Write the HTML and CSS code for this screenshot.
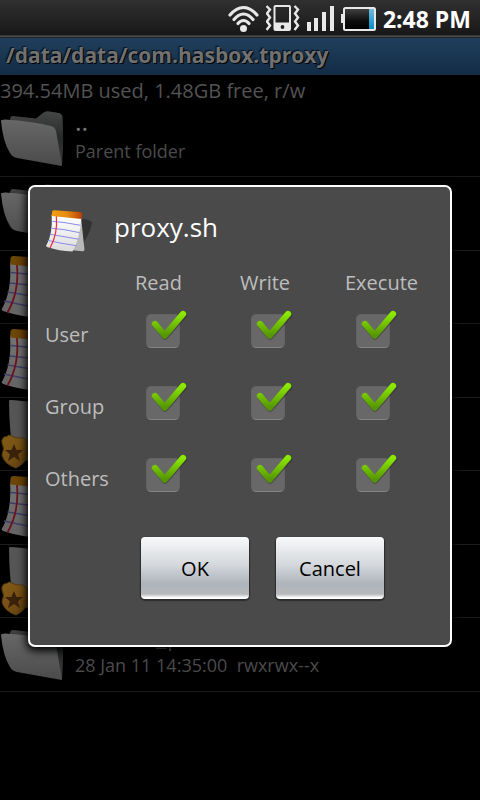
FILE: index.html
```html
<!DOCTYPE html>
<html lang="en">
<head>
<meta charset="utf-8">
<meta name="viewport" content="width=device-width, initial-scale=1">
<title>File permissions</title>
<link rel="stylesheet" href="styles.css">
</head>
<body>
<svg class="defs" aria-hidden="true">
  <defs>
    <linearGradient id="g-front" x1="0" y1="0" x2="0" y2="1"><stop offset="0" stop-color="#676767"/><stop offset="1" stop-color="#4b4b4b"/></linearGradient>
    <linearGradient id="g-back" x1="0" y1="0" x2="0" y2="1"><stop offset="0" stop-color="#454646"/><stop offset=".5" stop-color="#282929"/><stop offset="1" stop-color="#3a3a3a"/></linearGradient>
    <linearGradient id="g-strip" x1="0" y1="0" x2="1" y2="0"><stop offset="0" stop-color="#f0a010"/><stop offset=".5" stop-color="#e88a10"/><stop offset="1" stop-color="#b84008"/></linearGradient>
    <linearGradient id="g-page" x1="0" y1="0" x2="0" y2="1"><stop offset="0" stop-color="#fff"/><stop offset="1" stop-color="#dcdcdc"/></linearGradient>
    <linearGradient id="g-badge" x1="0" y1="0" x2="1" y2="1"><stop offset="0" stop-color="#835d16"/><stop offset=".5" stop-color="#765015"/><stop offset="1" stop-color="#593a0c"/></linearGradient>
    <linearGradient id="g-tick" x1="0" y1="0" x2="0" y2="1"><stop offset="0" stop-color="#8bea00"/><stop offset="1" stop-color="#559500"/></linearGradient>
    <linearGradient id="g-batt" x1="0" y1="0" x2="0" y2="1"><stop offset="0" stop-color="#444"/><stop offset=".6" stop-color="#0c0c0c"/><stop offset="1" stop-color="#000"/></linearGradient>
    <linearGradient id="g-charge" x1="0" y1="0" x2="0" y2="1"><stop offset="0" stop-color="#72b9dc"/><stop offset=".5" stop-color="#3aa5d6"/><stop offset="1" stop-color="#078ac5"/></linearGradient>
  </defs>
  <symbol id="folder" viewBox="0 0 72 72">
    <path d="M10 16Q10 12 13 12L36 14.500L43 9Q45 7 48 7.300L59 9Q62 9.500 62.500 13Q64 38 62 61Z" fill="url(#g-back)"/>
    <path d="M1 17Q1 15.500 5 15.500Q32 17 51 22Q55 23 56 27L62 61Q62 62.500 59 61.500L17 54Q12 53 10 49Q3 38 1 17Z" fill="url(#g-front)"/>
  </symbol>
  <symbol id="notepad" viewBox="0 0 48 48">
    <path d="M36 12Q44 12 47 15Q46 24 39 35L36 42Z" fill="#252525" opacity=".65"/>
    <path d="M36 10L39.500 43Q39 44.500 37 44.300L25 43Z" fill="#b8b8b8"/>
    <path d="M6.700 8Q8 27 1 39L2 40Q14 44 27.500 44.500Q35 32 36.300 11Z" fill="url(#g-page)"/>
    <path d="M7.300 14.300L19 15.500L35.500 18.300M6.700 21.300L19 22.600L34.700 25.700M5 27.300L18 29.500L33.500 32.200M2.700 33.300L16 36.200L31.500 38.700" fill="none" stroke="#8a8aee" stroke-width="1"/>
    <path d="M11.300 9Q13 27 5 41" fill="none" stroke="#f0283c" stroke-width="1.200"/>
    <path d="M7 5Q7 3.300 9 3.300L34 5Q37.300 5.300 37 7L36.500 12L6.700 9Z" fill="url(#g-strip)"/>
  </symbol>
  <symbol id="script" viewBox="0 0 72 72">
    <path d="M9 3Q9 1.500 12 2L54 6Q52 38 40 63L14 62Q9 32 9 3Z" fill="#555"/>
    <path d="M4 39Q7 39 9 37Q16 41 23 40Q27 42 28 46Q26 50 28 57Q26 65 16 70Q4 66 2 57Q5 50 2 45Q1 42 4 39Z" fill="url(#g-badge)" stroke="#543b10" stroke-width="1"/>
    <path d="M14 46L16.500 52H23L18 56.500L20 63L14 59L8 63L10 56.500L5 52H11.500Z" fill="#3a210b"/>
  </symbol>
  <symbol id="tick" viewBox="0 0 38 32">
    <path d="M4.500 15L14 26.500L33 5" fill="none" stroke="#303030" stroke-width="6.500" stroke-linecap="round" stroke-linejoin="round" opacity=".5"/>
    <path d="M4 14L13.700 25.500L32 4" fill="none" stroke="url(#g-tick)" stroke-width="6.300" stroke-linecap="round" stroke-linejoin="round"/>
  </symbol>
</svg>

<header class="status">
  <svg class="wifi" width="32" height="32" viewBox="0 0 32 32" fill="none" stroke="#e8e8e8" stroke-width="3.200" stroke-linecap="round"><path d="M2 12Q8.500 4.500 15.500 4.500T29 12M6 16.500Q10.500 11 15.500 11T25 16.500M10 20.500Q12.500 17.500 15.500 17.500T21 20.500"/><circle cx="15.500" cy="25.500" r="3.500" fill="#e8e8e8" stroke="none"/></svg>
  <svg width="35" height="32" viewBox="1 1 35 32"><path d="M10.500 3H24Q26 3 26 5V27Q26 29 24 29H10.500Q8.500 29 8.500 27V5Q8.500 3 10.500 3ZM10.500 5V20.500H24V5Z" fill="#e8e8e8" fill-rule="evenodd"/><circle cx="17.500" cy="25" r="1.900" fill="#222"/><path d="M1.500 4L5 7.500L2 11.500L5 15.500L2 19.500L5 23.500L1.500 28M29.500 4L33 7.500L30 11.500L33 15.500L30 19.500L33 23.500L29.500 28" fill="none" stroke="#e8e8e8" stroke-width="2.400"/></svg>
  <svg width="28" height="32" viewBox="1 0 28 32" fill="#e8e8e8"><path d="M1 19h4v9H1zM8 15h4v13H8zM16 9h4v19h-4zM24 3h4v25h-4z"/></svg>
  <svg width="36" height="32" viewBox="1 1 36 32"><path d="M0 12h4v9H0z" fill="#e8e8e8"/><rect x="4" y="6" width="31" height="22" rx="1.500" fill="url(#g-batt)" stroke="#e8e8e8" stroke-width="2"/><path d="M29 7h5v20h-5z" fill="url(#g-charge)"/></svg>
  <time class="clock">2:48 PM</time>
</header>

<main class="screen">
  <h1 class="path">/data/data/com.hasbox.tproxy</h1>
  <p class="usage">394.54MB used, 1.48GB free, r/w</p>
  <ul class="files">
    <li class="file"><svg class="icon"><use href="#folder"/></svg><div class="info"><span class="name">..</span><span class="meta">Parent folder</span></div></li>
    <li class="file"><svg class="icon"><use href="#folder"/></svg></li>
    <li class="file"><svg class="icon dim"><use href="#notepad"/></svg></li>
    <li class="file"><svg class="icon dim"><use href="#notepad"/></svg></li>
    <li class="file"><svg class="icon"><use href="#script"/></svg></li>
    <li class="file"><svg class="icon dim"><use href="#notepad"/></svg></li>
    <li class="file"><svg class="icon"><use href="#script"/></svg></li>
    <li class="file"><svg class="icon"><use href="#folder"/></svg><div class="info"><span class="name">shared_prefs</span><span class="meta">28 Jan 11 14:35:00&nbsp; rwxrwx--x</span></div></li>
  </ul>
</main>

<form class="dialog" role="dialog" aria-labelledby="dialog-title">
  <div class="heading">
    <svg class="badge"><use href="#notepad"/></svg>
    <h2 class="title" id="dialog-title">proxy.sh</h2>
  </div>
  <table class="perms">
    <thead>
      <tr><td></td><th scope="col">Read</th><th scope="col">Write</th><th scope="col">Execute</th></tr>
    </thead>
    <tbody>
      <tr><th scope="row">User</th>
        <td><label class="check"><input type="checkbox" aria-label="User read" checked><svg><use href="#tick"/></svg></label></td>
        <td><label class="check"><input type="checkbox" aria-label="User write" checked><svg><use href="#tick"/></svg></label></td>
        <td><label class="check"><input type="checkbox" aria-label="User execute" checked><svg><use href="#tick"/></svg></label></td></tr>
      <tr><th scope="row">Group</th>
        <td><label class="check"><input type="checkbox" aria-label="Group read" checked><svg><use href="#tick"/></svg></label></td>
        <td><label class="check"><input type="checkbox" aria-label="Group write" checked><svg><use href="#tick"/></svg></label></td>
        <td><label class="check"><input type="checkbox" aria-label="Group execute" checked><svg><use href="#tick"/></svg></label></td></tr>
      <tr><th scope="row">Others</th>
        <td><label class="check"><input type="checkbox" aria-label="Others read" checked><svg><use href="#tick"/></svg></label></td>
        <td><label class="check"><input type="checkbox" aria-label="Others write" checked><svg><use href="#tick"/></svg></label></td>
        <td><label class="check"><input type="checkbox" aria-label="Others execute" checked><svg><use href="#tick"/></svg></label></td></tr>
    </tbody>
  </table>
  <div class="actions">
    <button type="submit">OK</button>
    <button type="button">Cancel</button>
  </div>
</form>
</body>
</html>
```
FILE: styles.css
```css
* { box-sizing: border-box; }

body {
  position: relative;
  margin: 0;
  min-height: 100vh;
  background: #000;
  font-family: "Open Sans", "Noto Sans", sans-serif;
  font-size: 20px;
}

h1, h2, p, ul { margin: 0; padding: 0; font-weight: 400; }

.defs { position: absolute; width: 0; height: 0; }

.status {
  display: flex;
  justify-content: flex-end;
  align-items: center;
  gap: 6px;
  height: 38px;
  padding: 0 9px 0 0;
  background: linear-gradient(#303030, #181818 35px, #545454 36px, #454545 37px, #050505 38px);
}

.clock {
  color: #fff;
  font-size: 23px;
  font-weight: 700;
  line-height: 36px;
}

.path {
  height: 37px;
  padding-left: 6px;
  background: linear-gradient(#203f5c, #142c46);
  color: #717171;
  font-size: 21px;
  font-weight: 700;
  line-height: 35px;
  text-shadow: 1px 1px 1px #000, -1px -1px 1px #08121c;
  white-space: nowrap;
}

.usage {
  height: 29px;
  color: #535353;
  line-height: 31px;
}

.files { list-style: none; }

.file {
  display: flex;
  gap: 3px;
  height: 73px;
  border-bottom: 1px solid #191919;
}

.file:nth-child(even) { height: 74px; border-bottom-color: #1d1d1d; }

.icon { flex: none; width: 72px; height: 72px; }
.dim { opacity: .45; }

.info { display: flex; flex-direction: column; }

.name {
  color: #777;
  font-size: 25px;
  line-height: 35px;
}

.meta {
  color: #4b4b4b;
  font-size: 18px;
  line-height: 24px;
}

.dialog {
  position: absolute;
  top: 185px;
  left: 28px;
  right: 28px;
  padding: 20px 0 46px 15px;
  border: 2px solid #fff;
  border-radius: 7px;
  background: #4a4a4a;
  box-shadow: 0 2px 8px 2px #000;
}

.heading {
  display: flex;
  gap: 21px;
  height: 60px;
}

.badge { width: 48px; height: 48px; }

.title {
  color: #fff;
  font-size: 26px;
  line-height: 40px;
}

.perms {
  width: 100%;
  border-collapse: collapse;
  table-layout: fixed;
  color: #bdbdbd;
}

.perms th, .perms td {
  height: 72px;
  padding: 0;
  font-weight: 400;
  text-align: left;
  vertical-align: middle;
}

.perms thead th, .perms thead td { height: 31px; }
.perms tr > :first-child { width: 90px; }

.check {
  position: relative;
  display: block;
  width: 34px;
  margin: 0 0 6px 11px;
}

.check input {
  display: block;
  width: 34px;
  height: 34px;
  margin: 0;
  appearance: none;
  border: 1px solid #636363;
  border-bottom-color: #858585;
  border-radius: 5px;
  background: #686868;
}

.check svg {
  position: absolute;
  top: -4px;
  left: 5px;
  width: 38px;
  height: 32px;
}

.check input:not(:checked) + svg { visibility: hidden; }

.actions {
  display: flex;
  justify-content: center;
  gap: 27px;
  margin-top: 23px;
  padding: 0 15px 0 45px;
}

.actions button {
  width: 108px;
  height: 62px;
  padding: 0;
  border: 0;
  border-radius: 4px;
  background: linear-gradient(#f8f9fa, #d4d8dc 45%, #afb4bd 75%, #b6b9bc 92%, #fff 98%);
  box-shadow: 0 1px 1px 1px #2c2c2c;
  color: #000;
  font: inherit;
}
```
